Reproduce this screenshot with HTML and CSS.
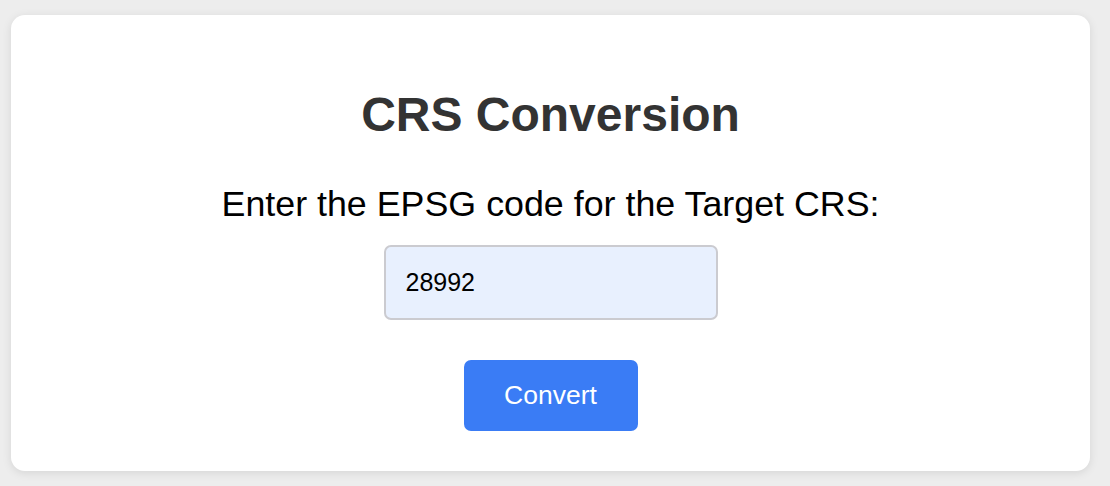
FILE: index.html
```html
<!DOCTYPE html>
<html lang="en">
<head>
<meta charset="utf-8">
<title>CRS Conversion</title>
<link rel="stylesheet" href="styles.css">
</head>
<body>
  <main class="card">
    <h1 class="title">CRS Conversion</h1>
    <label class="label" for="epsg">Enter the EPSG code for the Target CRS:</label>
    <input class="input" id="epsg" type="text" value="28992">
    <button class="button" type="button">Convert</button>
  </main>
</body>
</html>
```

FILE: styles.css
```css
* { box-sizing: border-box; }

html, body {
  margin: 0;
  height: 100%;
}

body {
  background: #ededed;
  padding: 15px 20px 15px 11px;
  font-family: "Liberation Sans", Arial, Helvetica, sans-serif;
  overflow: hidden;
}

.card {
  background: #ffffff;
  border-radius: 14px;
  box-shadow: 0 2px 10px rgba(0, 0, 0, 0.10);
  height: 456px;
  padding: 76px 20px 40px;
  display: flex;
  flex-direction: column;
  align-items: center;
}

.title {
  margin: 0;
  font-size: 48px;
  line-height: 48px;
  font-weight: 700;
  color: #333333;
}

.label {
  display: block;
  margin-top: 48px;
  font-size: 35.8px;
  line-height: 35px;
  color: #000000;
}

.input {
  margin-top: 23px;
  width: 334px;
  height: 75px;
  padding: 0 20px;
  border: 2px solid #cbcbd0;
  border-radius: 7px;
  background: #e8f0fe;
  font-family: "Liberation Sans", Arial, Helvetica, sans-serif;
  font-size: 25px;
  color: #000000;
  outline: none;
}

.button {
  margin-top: 40px;
  width: 174px;
  height: 71px;
  border: none;
  border-radius: 7px;
  background: #3a7cf5;
  color: #ffffff;
  font-family: "Liberation Sans", Arial, Helvetica, sans-serif;
  font-size: 26.5px;
  cursor: pointer;
}
```
